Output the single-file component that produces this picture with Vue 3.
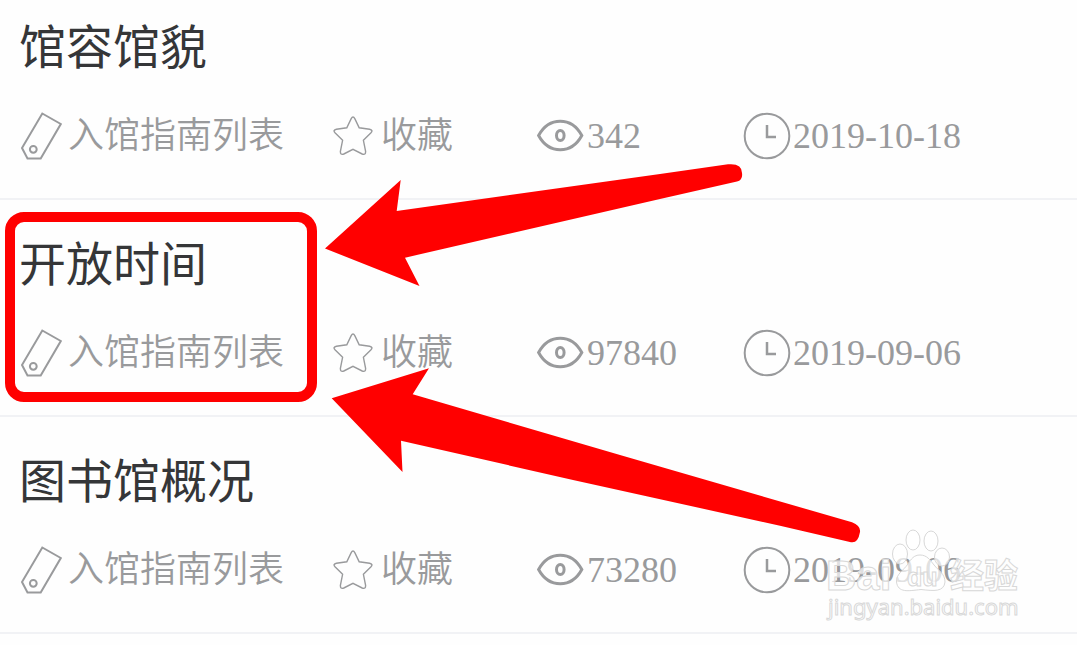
<script setup>
const articles = [
  { title: '馆容馆貌', category: '入馆指南列表', views: 342, date: '2019-10-18' },
  { title: '开放时间', category: '入馆指南列表', views: 97840, date: '2019-09-06' },
  { title: '图书馆概况', category: '入馆指南列表', views: 73280, date: '2019-09-06' },
]
</script>

<template>
  <main class="page">
    <ul class="list">
      <li v-for="item in articles" :key="item.title" class="row">
        <h2 class="title"><a href="#">{{ item.title }}</a></h2>
        <div class="meta">
          <a class="item" href="#">
            <svg class="icon" viewBox="0 0 48 50" aria-hidden="true">
              <path d="M22.3 2.5 L40.8 13 L20.7 47.5 H7.5 L2 37 Z" />
              <circle cx="13.3" cy="38.3" r="3.4" />
            </svg>
            <span>{{ item.category }}</span>
          </a>
          <button class="item" type="button">
            <svg class="icon thin" viewBox="0 0 48 50" aria-hidden="true">
              <path d="M18.2 7.6 Q20 4.4 21.8 7.6 L26.2 16.8 L36.6 18.3 Q40.4 19.2 38 21.8 L30.4 29.3 L32.6 40.3 Q32.8 44.4 29.2 43 L20 38.4 L10.8 43 Q7.2 44.4 7.4 40.3 L9.6 29.3 L2 21.8 Q-0.4 19.2 3.4 18.3 L13.8 16.8 Z" />
            </svg>
            <span>收藏</span>
          </button>
          <span class="item number">
            <svg class="icon bold" viewBox="0 0 48 50" aria-hidden="true">
              <path d="M1.6 24.5 C12 5.5 34.5 5.5 44.8 24.5 C34.5 43.5 12 43.5 1.6 24.5 Z" />
              <ellipse cx="23.3" cy="24.5" rx="3.8" ry="5" />
            </svg>
            <span>{{ item.views }}</span>
          </span>
          <span class="item number">
            <svg class="icon" viewBox="0 0 48 50" aria-hidden="true">
              <circle cx="24" cy="25" r="22.3" />
              <path class="hands" d="M24 14 V26 H33" />
            </svg>
            <time :datetime="item.date">{{ item.date }}</time>
          </span>
        </div>
      </li>
    </ul>

    <svg class="overlay" viewBox="0 0 1077 645" aria-hidden="true">
      <g class="marks">
        <rect class="frame" x="10" y="217" width="302" height="180" rx="14" />
        <path d="M325 248.5 L400.7 180 L396.7 211 L660 174 L728 164.3 Q742 163 742 173 Q743 180 737 181.5 L660 199 L405 257.7 L419.5 286 Z" />
        <path d="M331.7 398.3 L429 368.3 L412.7 394.3 L620 455 L852 522.3 Q861 526 860 532 Q858 543.5 851 542.2 L780 525.7 L573 480 L401 440.7 L402.5 472 Z" />
      </g>
      <g class="watermark">
        <ellipse cx="913" cy="540" rx="7" ry="10" />
        <ellipse cx="931" cy="541" rx="7" ry="10" />
        <ellipse cx="900" cy="554" rx="7.5" ry="10" />
        <ellipse cx="942" cy="557" rx="7.5" ry="9" />
        <path d="M920 555 C927 555 930 560 934 565 C939 571 945 574 945 582 C944 592 934 591 921 589.5 C908 591 898 593 896.5 582 C896 574 903 571 908 564 C911 559 914 555 920 555 Z" />
        <text class="brand" x="826" y="590">Bai</text>
        <text class="du" x="907" y="586">du</text>
        <text class="cn" x="950" y="588">经验</text>
        <text class="site" x="828" y="615">jingyan.baidu.com</text>
      </g>
    </svg>
  </main>
</template>

<style>
body {
  margin: 0;
  background: #fefefe;
}
</style>

<style scoped>
.page {
  position: relative;
  overflow: hidden;
  font-family: "Liberation Serif", "Noto Sans CJK SC", serif;
  color: #999a9c;
}
.list {
  margin: 0;
  padding: 0;
  list-style: none;
}
.row {
  padding: 31px 20px 38px;
  border-bottom: 2px solid #f1f2f5;
}
.row:first-child {
  padding-top: 14px;
}
.title {
  margin: 0 -1px 38px;
  font: 400 47px/60px "Noto Sans CJK SC", sans-serif;
}
.title a {
  color: #353638;
  text-decoration: none;
}
.meta {
  display: grid;
  grid-template-columns: 313fr 204fr 206fr 314fr;
}
.item {
  display: flex;
  align-items: center;
  height: 48px;
  padding: 0;
  border: 0;
  background: none;
  color: inherit;
  font: 350 36px/48px "Liberation Serif", "Noto Sans CJK SC", serif;
  text-decoration: none;
  white-space: nowrap;
}
.number {
  gap: 2px;
}
.icon {
  flex: none;
  width: 48px;
  height: 50px;
  fill: none;
  stroke: #999a9c;
  stroke-width: 2;
}
.thin {
  stroke-width: 1.4;
}
.bold {
  stroke-width: 3;
}
.hands {
  stroke-width: 2.5;
}
.overlay {
  position: absolute;
  top: 0;
  left: 0;
  width: 100%;
  pointer-events: none;
}
.marks {
  fill: #ff0000;
}
.frame {
  fill: none;
  stroke: #ff0000;
  stroke-width: 10;
}
.watermark {
  fill: rgba(255, 255, 255, 0.7);
  stroke: #d8d8d8;
  stroke-width: 1;
}
.brand {
  font: 700 42px "Liberation Sans", sans-serif;
}
.du {
  font: 700 25px "Liberation Sans", sans-serif;
}
.cn {
  font: 700 34px "Noto Sans CJK SC", sans-serif;
}
.site {
  font: 400 22px "Noto Sans", sans-serif;
}
</style>
